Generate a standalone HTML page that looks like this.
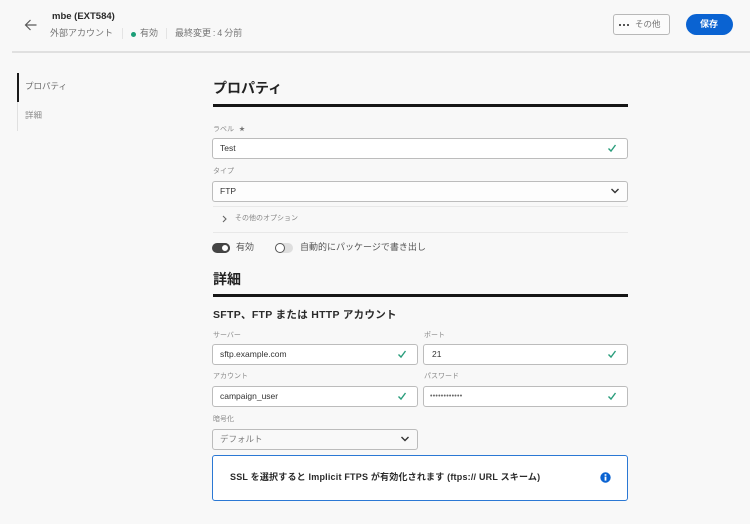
<!DOCTYPE html>
<html lang="ja"><head><meta charset="utf-8"><title>mbe (EXT584)</title>
<style>
html,body{margin:0;padding:0}
body{width:750px;height:524px;background:#f8f8f8;position:relative;overflow:hidden;font-family:"Liberation Sans","Noto Sans CJK JP",sans-serif;color:#2c2c2c}
.a{position:absolute;white-space:nowrap;line-height:1}
.box{position:absolute;box-sizing:border-box;background:#fff;border:1.5px solid #bcbcbc;border-radius:3px;height:21px}
.box span{position:absolute;left:7px;top:4px;font-size:8.5px;line-height:11px;color:#333;white-space:nowrap}
.box svg{position:absolute}
.lbl{position:absolute;font-size:7px;line-height:1;color:#8a8a8a;white-space:nowrap}
.h{position:absolute;font-size:14px;font-weight:bold;line-height:1;color:#222;white-space:nowrap}
.rule{position:absolute;left:213px;width:415px;height:2.5px;background:#161616}
.sep{position:absolute;height:1px;background:#e8e8e8}
</style></head><body>

<svg class="a" style="left:24px;top:18px" width="14" height="14" viewBox="0 0 14 14" fill="none" stroke="#5a5a5a" stroke-width="1.2"><path d="M1.5 7H12.5M6.5 2L1.5 7L6.5 12"/></svg>
<div class="a" style="left:52px;top:12px;font-size:9.5px;font-weight:bold;color:#2a2a2a">mbe (EXT584)</div>
<div class="a" style="left:50px;top:29px;font-size:9px;color:#757575">外部アカウント</div>
<div class="a" style="left:122px;top:28px;width:1px;height:11px;background:#e4e4e4"></div>
<div class="a" style="left:131px;top:32px;width:5px;height:5px;border-radius:50%;background:#1b9e77"></div>
<div class="a" style="left:140px;top:29px;font-size:9px;color:#757575">有効</div>
<div class="a" style="left:166px;top:28px;width:1px;height:11px;background:#e4e4e4"></div>
<div class="a" style="left:175px;top:29px;font-size:9px;color:#757575;word-spacing:-.6px">最終変更 : 4 分前</div>

<div class="a" style="left:613px;top:14px;width:57px;height:21px;box-sizing:border-box;border:1px solid #b8b8b8;border-radius:3px;background:#fbfbfb"></div>
<div class="a" style="left:619px;top:24px;width:2px;height:2px;background:#555;box-shadow:4px 0 0 #555,8px 0 0 #555"></div>
<div class="a" style="left:635px;top:20px;font-size:8.5px;color:#757575">その他</div>
<div class="a" style="left:686px;top:14px;width:47px;height:21px;border-radius:11px;background:#0a63d2"></div>
<div class="a" style="left:700px;top:20px;font-size:9px;font-weight:bold;color:#fff">保存</div>

<div class="a" style="left:12px;top:51px;width:738px;height:1.5px;background:#e0e0e0"></div>

<div class="a" style="left:17px;top:73px;width:1px;height:58px;background:#e0e0e0"></div>
<div class="a" style="left:17px;top:73px;width:1.5px;height:29px;background:#1a1a1a"></div>
<div class="a" style="left:25px;top:82px;font-size:8.5px;color:#6a6a6a">プロパティ</div>
<div class="a" style="left:25px;top:111px;font-size:8.5px;color:#8a8a8a">詳細</div>

<div class="h" style="left:213px;top:81px">プロパティ</div>
<div class="rule" style="top:104px"></div>

<div class="lbl" style="left:213px;top:126px">ラベル</div>
<div class="a" style="left:239px;top:127px;font-size:6px;color:#777">★</div>
<div class="box" style="left:212px;top:138px;width:416px"><span>Test</span><svg style="left:394px;top:4px" width="10" height="10" viewBox="0 0 10 10" fill="none" stroke="#2a9d7c" stroke-width="1.4"><path d="M1.5 5.5L4 8L8.5 2"/></svg></div>
<div class="lbl" style="left:213px;top:168px">タイプ</div>
<div class="box" style="left:212px;top:181px;width:416px;background:#fdfdfd"><span>FTP</span><svg style="left:397px;top:4px" width="10" height="10" viewBox="0 0 10 10" fill="none" stroke="#333" stroke-width="1.4"><path d="M1.5 3L5 6.5L8.5 3"/></svg></div>
<div class="sep" style="left:213px;top:206px;width:415px"></div>
<svg class="a" style="left:221px;top:215px" width="7" height="8" viewBox="0 0 7 8" fill="none" stroke="#666" stroke-width="1.1"><path d="M2 1L5 4L2 7"/></svg>
<div class="a" style="left:235px;top:215px;font-size:7px;color:#868686">その他のオプション</div>
<div class="sep" style="left:213px;top:232px;width:415px"></div>

<div class="a" style="left:212px;top:243px;width:18px;height:10px;border-radius:5px;background:#444"></div>
<div class="a" style="left:220px;top:243px;width:10px;height:10px;box-sizing:border-box;border:2px solid #444;border-radius:50%;background:#fff"></div>
<div class="a" style="left:236px;top:243px;font-size:9px;color:#555">有効</div>
<div class="a" style="left:275px;top:243px;width:18px;height:10px;border-radius:5px;background:#dedede"></div>
<div class="a" style="left:275px;top:243px;width:10px;height:10px;box-sizing:border-box;border:1.5px solid #555;border-radius:50%;background:#fff"></div>
<div class="a" style="left:300px;top:243px;font-size:9px;color:#555">自動的にパッケージで書き出し</div>

<div class="h" style="left:213px;top:272px">詳細</div>
<div class="rule" style="top:294px"></div>
<div class="a" style="left:213px;top:310px;font-size:10.5px;font-weight:bold;color:#2a2a2a;letter-spacing:.3px">SFTP、FTP または HTTP アカウント</div>

<div class="lbl" style="left:213px;top:332px">サーバー</div>
<div class="box" style="left:212px;top:344px;width:205.5px"><span>sftp.example.com</span><svg style="left:184px;top:4px" width="10" height="10" viewBox="0 0 10 10" fill="none" stroke="#2a9d7c" stroke-width="1.4"><path d="M1.5 5.5L4 8L8.5 2"/></svg></div>
<div class="lbl" style="left:424px;top:332px">ポート</div>
<div class="box" style="left:423px;top:344px;width:205px"><span style="left:8px">21</span><svg style="left:183px;top:4px" width="10" height="10" viewBox="0 0 10 10" fill="none" stroke="#2a9d7c" stroke-width="1.4"><path d="M1.5 5.5L4 8L8.5 2"/></svg></div>
<div class="lbl" style="left:213px;top:373px">アカウント</div>
<div class="box" style="left:212px;top:386px;width:205.5px"><span>campaign_user</span><svg style="left:184px;top:4px" width="10" height="10" viewBox="0 0 10 10" fill="none" stroke="#2a9d7c" stroke-width="1.4"><path d="M1.5 5.5L4 8L8.5 2"/></svg></div>
<div class="lbl" style="left:424px;top:373px">パスワード</div>
<div class="box" style="left:423px;top:386px;width:205px"><span style="left:6px;font-size:7px;letter-spacing:.25px;color:#666">••••••••••••</span><svg style="left:183px;top:4px" width="10" height="10" viewBox="0 0 10 10" fill="none" stroke="#2a9d7c" stroke-width="1.4"><path d="M1.5 5.5L4 8L8.5 2"/></svg></div>

<div class="lbl" style="left:213px;top:416px">暗号化</div>
<div class="box" style="left:212px;top:429px;width:205.5px;background:#f9f9f9"><span style="color:#7a7a7a">デフォルト</span><svg style="left:187px;top:4px" width="10" height="10" viewBox="0 0 10 10" fill="none" stroke="#333" stroke-width="1.4"><path d="M1.5 3L5 6.5L8.5 3"/></svg></div>

<div class="a" style="left:212px;top:455px;width:416px;height:46px;box-sizing:border-box;border:1.5px solid #2b78d4;border-radius:3px;background:#fff"></div>
<div class="a" style="left:230px;top:473px;font-size:9px;font-weight:bold;color:#2a2a2a;letter-spacing:.2px">SSL を選択すると Implicit FTPS が有効化されます (ftps:// URL スキーム)</div>
<svg class="a" style="left:600px;top:472px" width="11" height="11" viewBox="0 0 11 11"><circle cx="5.5" cy="5.5" r="5.2" fill="#0a63d2"/><rect x="4.6" y="4.6" width="1.8" height="4" fill="#fff"/><rect x="4.6" y="2.2" width="1.8" height="1.6" fill="#fff"/></svg>
</body></html>
